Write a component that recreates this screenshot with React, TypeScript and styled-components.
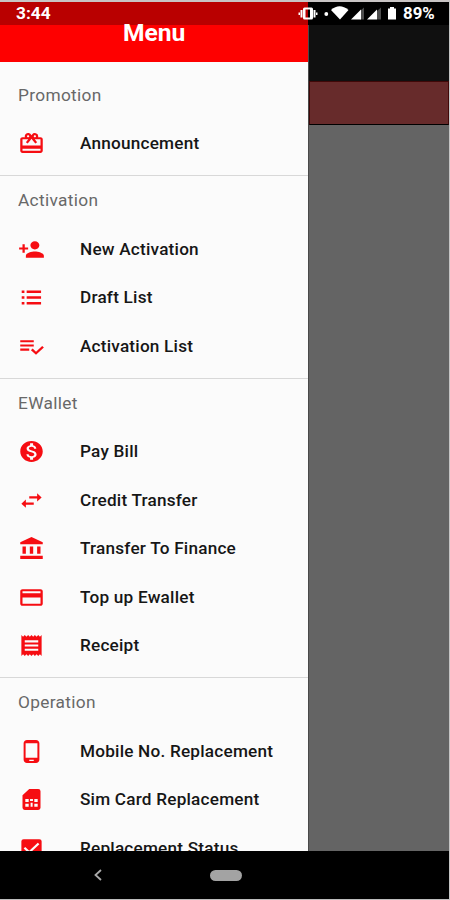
import React from 'react';
import styled, { createGlobalStyle } from 'styled-components';
import type { IconType } from 'react-icons';
import {
  MdCardGiftcard, MdPersonAdd, MdMonetizationOn, MdSwapHoriz, MdAccountBalance,
  MdCreditCard, MdReceipt, MdPhoneAndroid, MdCheckBox,
} from 'react-icons/md';

const GlobalStyle = createGlobalStyle`
  * { box-sizing: border-box; }
  body { margin: 0; background: #c9c9c9; font-family: Roboto, "Liberation Sans", sans-serif; }
`;

const Screen = styled.div`
  width: 450px;
  height: 900px;
  display: flex;
  flex-direction: column;
  overflow: hidden;
  background: #000;
  border-top: 2px solid #c8c4c4;
  border-right: 1px solid #c4c4c4;
  border-bottom: 1px solid #bdbdbd;
`;

const StatusBar = styled.header`
  flex: none;
  height: 23px;
  display: flex;
  align-items: center;
  justify-content: space-between;
  padding: 0 13px 0 16px;
  background: linear-gradient(to right, #b90000 308px, #000 308px);
  color: #fff;
  font-size: 16px;
  font-weight: 700;
  line-height: 27px;
`;

const Clock = styled.span`
  font-size: 16px;
  transform: scaleX(1.08);
  transform-origin: left;
`;

const StatusIcons = styled.div`
  display: flex;
  align-items: center;
  height: 23px;
  svg { display: block; }
`;

const Battery = styled.span`
  margin-left: 4px;
  width: 33px;
  font-weight: 700;
  white-space: nowrap;
  transform: scaleX(1.05);
  transform-origin: left;
`;

const Main = styled.main`
  flex: none;
  height: 826px;
  display: flex;
`;

const Drawer = styled.nav`
  flex: none;
  width: 308px;
  background: #fbfbfb;
`;

const DrawerHeader = styled.div`
  height: 36.5px;
  background: #fe0000;
  color: #fff;
  text-align: center;
  font-size: 23px;
  font-weight: 700;
  line-height: 18px;

  span { display: inline-block; transform: scaleX(1.07); }
`;

const Sections = styled.div`
  padding-top: 9px;
`;

const Section = styled.section`
  padding-bottom: 7.5px;
  border-bottom: 1px solid #d8d8d8;

  &:last-child { border-bottom: 0; }
`;

const SectionTitle = styled.h2`
  margin: 0;
  height: 48.5px;
  padding-left: 18px;
  color: #686868;
  font-size: 16px;
  font-weight: 400;
  line-height: 50px;
  letter-spacing: 0.3px;

  span { display: inline-block; transform: scaleX(1.08); transform-origin: left; }
`;

const Item = styled.a`
  display: grid;
  grid-template-columns: 61.6px 1fr;
  align-items: center;
  height: 48.5px;
  padding: 0.6px 0 0 18px;
  color: #161616;
  font-size: 16px;
  font-weight: 500;
  letter-spacing: 0.2px;
  white-space: nowrap;

  span { transform: scaleX(1.073); transform-origin: left; }

  svg { display: block; width: 27px; height: 25px; color: #f60d12; }
`;

const Backdrop = styled.div`
  flex: 1;
  display: flex;
  flex-direction: column;
  background: #646464;
  border-left: 1px solid #494949;
`;

const DimmedBar = styled.div`
  height: 56px;
  background: #101010;
`;

const DimmedBanner = styled.div`
  height: 44px;
  background: #672b2b;
  border: 1px solid #400808;
  border-bottom: 1px solid #000;
`;

const NavBar = styled.footer`
  position: relative;
  z-index: 1;
  flex: none;
  height: 48px;
  display: grid;
  grid-template-columns: 196px 60px 1fr;
  align-items: center;
  justify-items: center;
  background: #000;
`;

const HomePill = styled.span`
  width: 32px;
  height: 11px;
  border-radius: 6px;
  background: #a3a3a3;
`;

const ListIcon = () => (
  <svg viewBox="0 0 24 24" preserveAspectRatio="none" fill="currentColor">
    <path d="M3.3 5.3h2.4v2.4H3.3zM3.3 10.8h2.4v2.4H3.3zM3.3 16.3h2.4v2.4H3.3zM7.7 5.3h12.8v2.4H7.7zM7.7 10.8h12.8v2.4H7.7zM7.7 16.3h12.8v2.4H7.7z" />
  </svg>
);

const ListCheckIcon = () => (
  <svg viewBox="0 0 24 24" preserveAspectRatio="none" fill="currentColor">
    <path d="M14 10H2v2h12v-2zm0-4H2v2h12V6zM2 16h8v-2H2v2zm19.5-4.5L23 13l-6.99 7-4.51-4.5L13 14l3.01 3 5.49-5.5z" />
  </svg>
);

const SimIcon = () => (
  <svg viewBox="0 0 24 24" preserveAspectRatio="none" fill="currentColor">
    <path
      fillRule="evenodd"
      d="M18 2h-8L4 8v12a2 2 0 0 0 2 2h12a2 2 0 0 0 2-2V4a2 2 0 0 0-2-2zM6.500 11.500h3v3h-3zM14.500 11.500h3v3h-3zM6.500 16h3v3h-3zM14.500 16h3v3h-3zM10.700 11.500h2.600v2h-2.600zM11.200 15h1.800v4h-1.800z"
    />
  </svg>
);

const SystemIcons = () => (
  <svg width="102" height="23" viewBox="299 2 102 23" fill="#fff">
    <path fillRule="evenodd" d="M306.500 7.500h7a1.500 1.500 0 0 1 1.500 1.500v9a1.500 1.500 0 0 1-1.500 1.500h-7a1.500 1.500 0 0 1-1.500-1.500v-9a1.500 1.500 0 0 1 1.500-1.500zM307.500 9.500v8h4.500v-8z" />
    <path d="M302.500 10h2v7.500h-2zM315.500 10h2v7.500h-2zM300.500 12.500h1.500v2.500h-1.500zM318 12.500h1.500v2.500h-1.500z" />
    <circle cx="328.300" cy="14" r="1.900" />
    <path d="M333 10Q341.500 2.500 350.500 10L342 19.500z" />
    <path d="M366 7.500v12h-4V11z" fill="#4d4d4d" />
    <path d="M353 19.500 363 9.500v10z" />
    <path d="M383 7.500v12h-4V11z" fill="#4d4d4d" />
    <path d="M369 19.500 379 9.500v10z" />
    <path d="M390 8.500h2V7h4v1.500h2v11h-8z" />
  </svg>
);

const BackIcon = () => (
  <svg width="12" height="14" viewBox="0 0 12 14" fill="none" stroke="#aaa" strokeWidth="1.8">
    <path d="M9 2 3.500 7 9 12" />
  </svg>
);

type Entry = { label: string; icon: IconType | React.FC };

const groups: { title: string; items: Entry[] }[] = [
  { title: 'Promotion', items: [{ label: 'Announcement', icon: MdCardGiftcard }] },
  {
    title: 'Activation',
    items: [
      { label: 'New Activation', icon: MdPersonAdd },
      { label: 'Draft List', icon: ListIcon },
      { label: 'Activation List', icon: ListCheckIcon },
    ],
  },
  {
    title: 'EWallet',
    items: [
      { label: 'Pay Bill', icon: MdMonetizationOn },
      { label: 'Credit Transfer', icon: MdSwapHoriz },
      { label: 'Transfer To Finance', icon: MdAccountBalance },
      { label: 'Top up Ewallet', icon: MdCreditCard },
      { label: 'Receipt', icon: MdReceipt },
    ],
  },
  {
    title: 'Operation',
    items: [
      { label: 'Mobile No. Replacement', icon: MdPhoneAndroid },
      { label: 'Sim Card Replacement', icon: SimIcon },
      { label: 'Replacement Status', icon: MdCheckBox },
    ],
  },
];

export default function App() {
  return (
    <>
      <GlobalStyle />
      <Screen>
        <StatusBar>
          <Clock>3:44</Clock>
          <StatusIcons>
            <SystemIcons />
            <Battery>89%</Battery>
          </StatusIcons>
        </StatusBar>
        <Main>
          <Drawer>
            <DrawerHeader><span>Menu</span></DrawerHeader>
            <Sections>
              {groups.map((group) => (
                <Section key={group.title}>
                  <SectionTitle><span>{group.title}</span></SectionTitle>
                  {group.items.map(({ label, icon: Icon }) => (
                    <Item key={label}>
                      <Icon preserveAspectRatio="none" />
                      <span>{label}</span>
                    </Item>
                  ))}
                </Section>
              ))}
            </Sections>
          </Drawer>
          <Backdrop>
            <DimmedBar />
            <DimmedBanner />
          </Backdrop>
        </Main>
        <NavBar>
          <BackIcon />
          <HomePill />
        </NavBar>
      </Screen>
    </>
  );
}
